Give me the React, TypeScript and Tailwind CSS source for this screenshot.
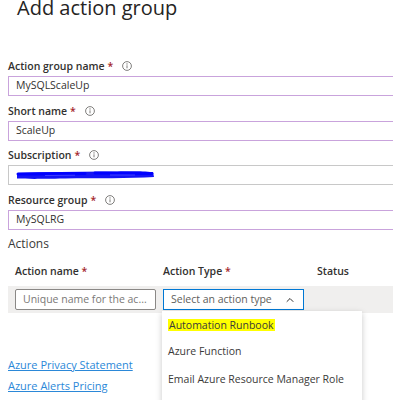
import { ChevronUp } from "lucide-react";

// form fields shown above the actions table
const fields = [
  { label: "Action group name", value: "MySQLScaleUp", border: "border-[#c9a3dc]" },
  { label: "Short name", value: "ScaleUp", border: "border-[#c9a3dc]" },
  { label: "Subscription", value: "", border: "border-[#c8c8c8]", hidden: true },
  { label: "Resource group", value: "MySQLRG", border: "border-[#c9a3dc]" },
];

const actionTypes = ["Automation Runbook", "Azure Function", "Email Azure Resource Manager Role"];

const InfoIcon = () => (
  <svg width="10" height="10" viewBox="0 0 10 10" className="ml-[9px]">
    <circle cx="5" cy="5" r="4.4" fill="none" stroke="#605e5c" strokeWidth="0.8" />
    <line x1="5" y1="4.3" x2="5" y2="7.3" stroke="#605e5c" strokeWidth="0.8" />
    <circle cx="5" cy="2.9" r="0.55" fill="#605e5c" />
  </svg>
);

// blue marker scribble hiding the subscription id
const Scribble = () => (
  <svg width="142" height="12" viewBox="0 0 142 12" className="absolute left-[6px] top-[3px]">
    <path
      d="M2 4 C30 2.5 60 3 90 2.5 S125 2 138 3 L139 8 C115 9.5 80 9 50 9.5 S15 10 2 9.5 Z"
      fill="#1414f5"
    />
    <path d="M3 5 L70 4.5 M80 4 L137 4.5" stroke="#0000ff" strokeWidth="3" strokeLinecap="round" />
    <path d="M30 6.5 L60 6.2 M95 6 L120 6" stroke="#4a4aff" strokeWidth="0.8" />
  </svg>
);

const App = () => {
  return (
    <div
      className="w-[393px] h-[400px] overflow-hidden bg-white text-[#323130] relative"
      style={{ fontFamily: '"Open Sans", "Noto Sans", sans-serif' }}
    >
      {/* Title */}
      <h1 className="pl-[17px] text-[20px] leading-[16px] text-[#252423]">Add action group</h1>

      <div className="pl-[8px] mt-[43px] flex flex-col gap-[7.5px]">
        {fields.map((f) => (
          <div key={f.label} className="flex flex-col">
            <div className="flex items-center h-[14px] mb-[3px] text-[10.5px] leading-[14px] font-semibold">
              <span>{f.label}</span>
              <span className="text-[#a4262c] ml-[3px]">*</span>
              <InfoIcon />
            </div>
            <div
              className={`relative h-[20px] border border-r-0 ${f.border} flex items-center pl-[7px] text-[10.5px] text-[#323130]`}
            >
              {f.hidden ? <Scribble /> : f.value}
            </div>
          </div>
        ))}
      </div>

      {/* Actions */}
      <div className="pl-[8px] mt-[7.5px] h-[14px] text-[12px] leading-[14px] text-[#3b3a39]">Actions</div>

      <div className="pl-[8px] mt-[13px] flex h-[14px] items-center text-[10.5px] leading-[14px] font-semibold">
        <div className="w-[155px] pl-[7px]">
          Action name <span className="text-[#a4262c]">*</span>
        </div>
        <div className="w-[154px]">
          Action Type <span className="text-[#a4262c]">*</span>
        </div>
        <div>Status</div>
      </div>

      <div className="ml-[8px] mt-[8px] h-[27px] bg-[#f0efee] flex items-center pl-[7px] gap-[7px] relative">
        <div className="w-[141px] h-[21px] bg-white border border-[#8a8886] rounded-[2px] flex items-center pl-[7px] text-[10.5px] text-[#7a7876]">
          Unique name for the ac...
        </div>
        <div className="w-[141px] h-[21px] bg-white border border-[#0078d4] flex items-center justify-between pl-[7px] pr-[7px] text-[10.5px] text-[#605e5c]">
          <span>Select an action type</span>
          <ChevronUp className="w-[12px] h-[12px] text-[#323130]" strokeWidth={2} />
        </div>

        {/* Dropdown */}
        <div className="absolute left-[154px] top-[25px] w-[200px] h-[100px] bg-white shadow-[0_2px_6px_rgba(0,0,0,0.22)] z-10 flex flex-col text-[10.5px] text-[#3b3a39]">
          {actionTypes.map((t, i) => (
            <div key={t} className="h-[27.5px] flex items-center pl-[6px]">
              <span className={i === 0 ? "bg-[#ffff00] px-[1px] leading-[12px]" : ""}>{t}</span>
            </div>
          ))}
        </div>
      </div>

      {/* Links */}
      <div className="pl-[8px] mt-[45px] flex flex-col gap-[7px] text-[11px] leading-[14px] text-[#2b88d8]">
        <a className="underline w-max">Azure Privacy Statement</a>
        <a className="underline w-max">Azure Alerts Pricing</a>
      </div>
    </div>
  );
};

export default App;
